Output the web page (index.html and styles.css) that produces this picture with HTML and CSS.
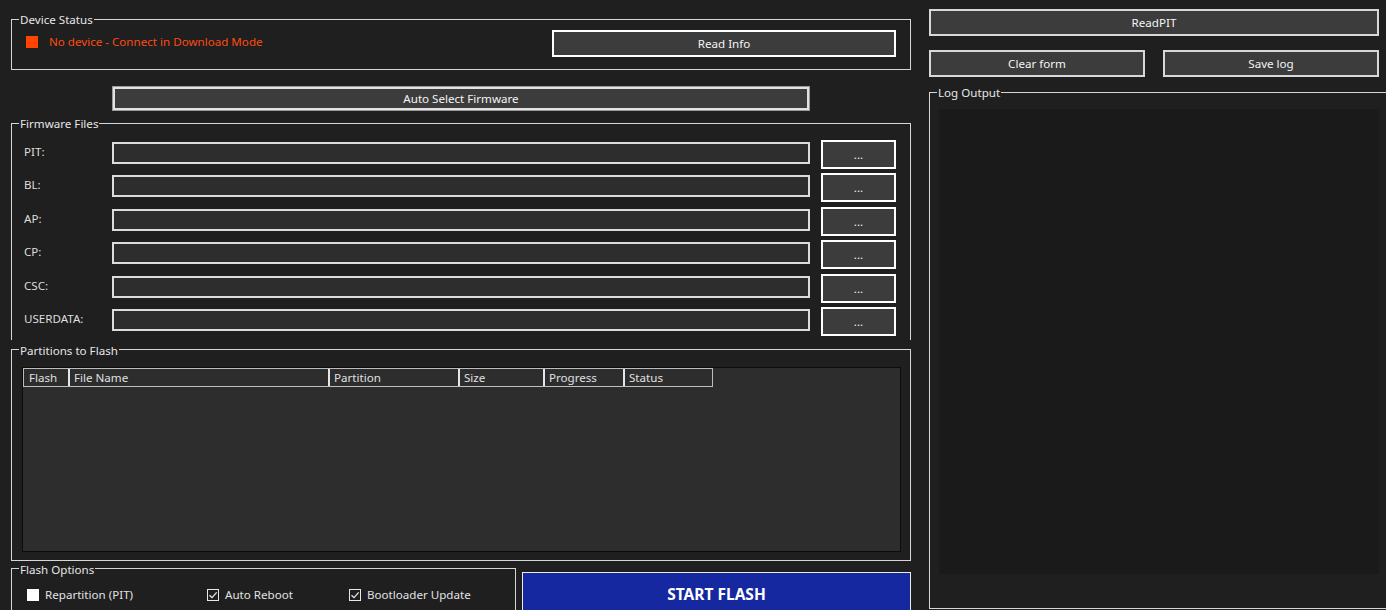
FILE: index.html
```html
<!DOCTYPE html>
<html lang="en">
<head>
<meta charset="UTF-8">
<meta name="viewport" content="width=device-width, initial-scale=1.0">
<title>Firmware Flasher</title>
<link rel="stylesheet" href="styles.css">
</head>
<body>

<div class="app">
    <div class="main">
        <fieldset class="group device">
            <legend>Device Status</legend>
            <div class="device-body">
                <div class="status">
                    <span class="dot"></span>
                    <span class="status-text">No device - Connect in Download Mode</span>
                </div>
                <button class="btn btn-read">Read Info</button>
            </div>
        </fieldset>

        <button class="btn btn-auto">Auto Select Firmware</button>

        <fieldset class="group files">
            <legend>Firmware Files</legend>
            <div class="files-body">
                <div class="file-row"><label for="pit">PIT:</label><input type="text" id="pit" class="path"><button class="btn btn-browse">...</button></div>
                <div class="file-row"><label for="bl">BL:</label><input type="text" id="bl" class="path"><button class="btn btn-browse">...</button></div>
                <div class="file-row"><label for="ap">AP:</label><input type="text" id="ap" class="path"><button class="btn btn-browse">...</button></div>
                <div class="file-row"><label for="cp">CP:</label><input type="text" id="cp" class="path"><button class="btn btn-browse">...</button></div>
                <div class="file-row"><label for="csc">CSC:</label><input type="text" id="csc" class="path"><button class="btn btn-browse">...</button></div>
                <div class="file-row"><label for="userdata">USERDATA:</label><input type="text" id="userdata" class="path"><button class="btn btn-browse">...</button></div>
            </div>
        </fieldset>

        <fieldset class="group partitions">
            <legend>Partitions to Flash</legend>
            <div class="partitions-body">
                <div class="list">
                    <div class="list-head">
                        <div class="col col-flash">Flash</div>
                        <div class="col col-name">File Name</div>
                        <div class="col col-part">Partition</div>
                        <div class="col col-size">Size</div>
                        <div class="col col-prog">Progress</div>
                        <div class="col col-status">Status</div>
                    </div>
                </div>
            </div>
        </fieldset>

        <div class="bottom-row">
            <fieldset class="group options">
                <legend>Flash Options</legend>
                <div class="options-body">
                    <div class="opt opt-repart"><span class="box"></span>Repartition (PIT)</div>
                    <div class="opt opt-reboot">
                        <span class="box checked"><svg width="10" height="10" viewBox="0 0 10 10"><path d="M1.5 5.2 L4 7.6 L8.7 2.4" fill="none" stroke="currentColor" stroke-width="1.3"/></svg></span>Auto Reboot
                    </div>
                    <div class="opt">
                        <span class="box checked"><svg width="10" height="10" viewBox="0 0 10 10"><path d="M1.5 5.2 L4 7.6 L8.7 2.4" fill="none" stroke="currentColor" stroke-width="1.3"/></svg></span>Bootloader Update
                    </div>
                </div>
            </fieldset>
            <button class="btn-flash">START FLASH</button>
        </div>
    </div>

    <div class="side">
        <button class="btn btn-side btn-pit">ReadPIT</button>
        <div class="side-actions">
            <button class="btn btn-side">Clear form</button>
            <button class="btn btn-side">Save log</button>
        </div>
        <fieldset class="group log">
            <legend>Log Output</legend>
            <div class="log-body">
                <div class="log-area"></div>
            </div>
        </fieldset>
    </div>
</div>

</body>
</html>
```

FILE: styles.css
```css
* {
    box-sizing: border-box;
}
body {
    margin: 0;
    padding: 0;
    background: #1f1f1f;
    color: #e2e2e2;
    font-family: "Noto Sans", "Open Sans", sans-serif;
    font-size: 11.6px;
    overflow: hidden;
    height: 610px;
}
.app {
    display: flex;
    padding-left: 11px;
    width: 1386px;
}
.main {
    width: 900px;
    flex-shrink: 0;
    padding-top: 11px;
}
.side {
    width: 470px;
    flex-shrink: 0;
    margin-left: 18px;
    padding-top: 9px;
}

/* group boxes */
.group {
    margin: 0;
    padding: 0;
    min-width: 0;
    border: 1px solid #d6d6d6;
}
.group legend {
    margin-left: 7px;
    padding: 1px 1px 0 1px;
    line-height: 15px;
    font-size: 11.6px;
    color: #e6e6e6;
}

/* buttons */
.btn {
    display: block;
    padding: 0;
    background: #3c3c3c;
    color: #f4f4f4;
    font-family: inherit;
    font-size: 11.6px;
    border: 2px solid #ffffff;
    cursor: pointer;
}
.btn:hover {
    background: #464646;
}

/* device status */
.device-body {
    display: flex;
    justify-content: space-between;
    align-items: flex-start;
    padding: 3px 14px 12px 14px;
}
.status {
    display: flex;
    align-items: center;
    gap: 11px;
    margin-top: 6px;
    height: 12px;
}
.dot {
    width: 12px;
    height: 12px;
    background: #ff4500;
}
.status-text {
    color: #ff4a10;
    line-height: 10px;
}
.btn-read {
    width: 344px;
    height: 27px;
}
.btn-auto {
    margin: 17px 0 0 102px;
    width: 696px;
    height: 23px;
    border-color: #e2e2e2;
    box-shadow: 0 0 0 1px #9a9a9a;
}

/* firmware files */
.files {
    margin-top: 5px;
    border-bottom: none;
}
.files-body {
    display: flex;
    flex-direction: column;
    gap: 4.4px;
    padding: 9px 14px 4px 12px;
}
.file-row {
    display: flex;
    align-items: flex-start;
    height: 29px;
}
.file-row label {
    width: 88px;
    line-height: 24px;
    color: #dedede;
}
.path {
    width: 698px;
    height: 22px;
    margin: 2px 0 0 0;
    border: 2px solid #dcdcdc;
    background: #2d2d2d;
    color: #e2e2e2;
    font-family: inherit;
    font-size: 11.6px;
    outline: none;
}
.btn-browse {
    width: 75px;
    height: 29px;
    margin-left: 11px;
}

/* partitions list */
.partitions {
    margin-top: 2px;
}
.partitions-body {
    padding: 9px 9px 8px 10px;
}
.list {
    height: 185px;
    border: 1px solid #0c0c0c;
    background: #2d2d2d;
}
.list-head {
    display: flex;
    width: 690px;
    height: 19px;
    border: 1px solid #bdbdbd;
}
.col {
    padding: 1px 0 0 4px;
    line-height: 16px;
    border-right: 2px solid #e6e6e6;
    color: #e0e0e0;
}
.col-flash { width: 46px; padding-left: 5px; }
.col-name { width: 260px; }
.col-part { width: 130px; }
.col-size { width: 85px; }
.col-prog { width: 80px; }
.col-status { width: 87px; border-right: none; }

/* flash options */
.bottom-row {
    display: flex;
    align-items: flex-start;
}
.options {
    width: 505px;
}
.options-body {
    display: flex;
    padding: 12px 0 20px 15px;
}
.opt {
    display: flex;
    align-items: center;
    gap: 6px;
    line-height: 12px;
    color: #e2e2e2;
}
.opt-repart { width: 180px; }
.opt-reboot { width: 142px; }
.box {
    width: 12px;
    height: 12px;
    background: #ffffff;
    display: flex;
    align-items: center;
    justify-content: center;
}
.box.checked {
    background: #1f1f1f;
    border: 1px solid #e8e8e8;
    color: #e8e8e8;
}
.btn-flash {
    margin: 11px 0 0 6px;
    width: 389px;
    height: 44px;
    padding: 0;
    background: #1528a0;
    border: 1px solid #ececec;
    color: #ffffff;
    font-family: inherit;
    font-size: 15.5px;
    font-weight: 700;
    cursor: pointer;
}

/* right side */
.btn-side {
    height: 27px;
    border-color: #d8d8d8;
}
.btn-pit {
    width: 450px;
}
.side-actions {
    display: flex;
    gap: 18px;
    margin-top: 14px;
    width: 450px;
}
.side-actions .btn {
    width: 216px;
}
.log {
    margin-top: 7px;
    width: 470px;
}
.log-body {
    padding: 9px 0 34px 9px;
}
.log-area {
    width: 440px;
    height: 465px;
    background: #1a1a1a;
}
```
